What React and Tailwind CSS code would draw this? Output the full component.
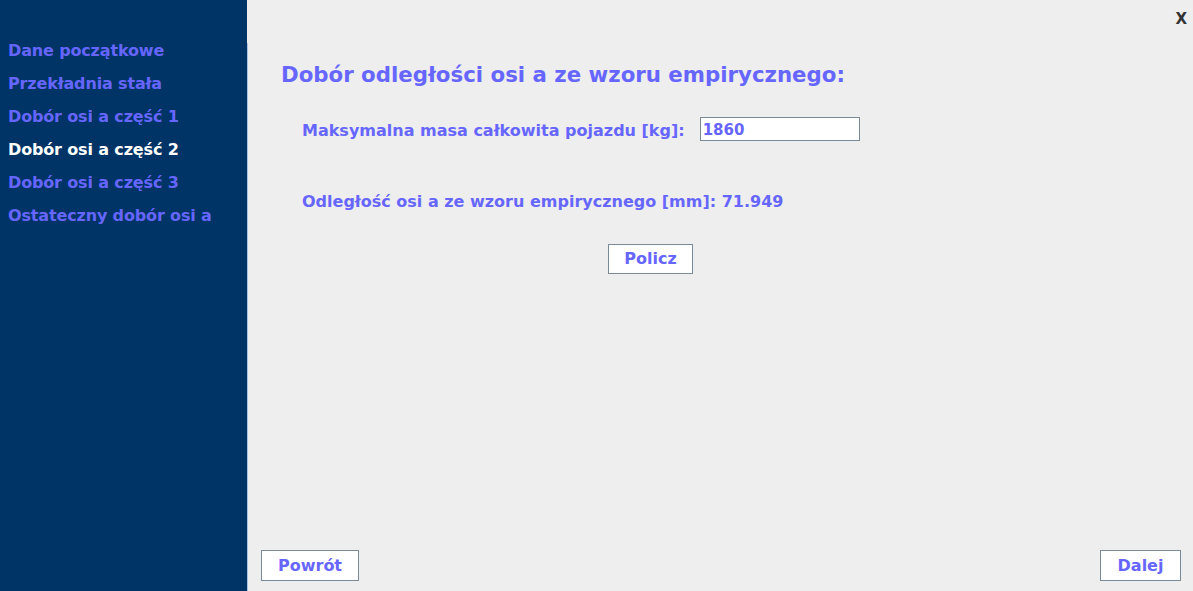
import React from "react";

const items = [
  "Dane początkowe",
  "Przekładnia stała",
  "Dobór osi a część 1",
  "Dobór osi a część 2",
  "Dobór osi a część 3",
  "Ostateczny dobór osi a",
];

export default function App() {
  return (
    <div className="flex h-[591px] w-full overflow-hidden font-['DejaVu_Sans',sans-serif] font-bold">
      <aside className="w-[247px] shrink-0 bg-[#003366] pt-[34px]">
        {items.map((t, i) => (
          <div
            key={t}
            className={`h-[33px] pl-[8px] text-[16px] leading-[33px] tracking-[-0.15px] ${
              i === 3 ? "text-white" : "text-[#6666ff]"
            }`}
          >
            {t}
          </div>
        ))}
      </aside>
      <div className="flex min-w-0 flex-1 bg-[#eeeeee]">
        <div className="mt-[43px] w-px bg-[#a9c4e4]" />
        <main className="flex min-w-0 flex-1 flex-col">
          <div className="flex h-[38px] items-center justify-end pr-[6px]">
            <span className="text-[15px] text-[#333333]">X</span>
          </div>
          <h1 className="mt-[22px] pl-[33px] text-[21.3px] leading-[30px] text-[#6666ff]">
            Dobór odległości osi a ze wzoru empirycznego:
          </h1>
          <div className="mt-[27px] flex h-[24px] items-center pl-[54px]">
            <span className="pt-[3px] text-[16px] text-[#6666ff]">
              Maksymalna masa całkowita pojazdu [kg]:
            </span>
            <input
              defaultValue="1860"
              className="ml-[15px] h-[24px] w-[160px] border border-[#7a8a99] bg-white px-[2px] pt-[2px] text-[15px] font-bold text-[#6666ff] outline-none"
            />
          </div>
          <div className="mt-[48px] h-[24px] pl-[54px] pt-[1px] text-[16px] leading-[24px] text-[#6666ff]">
            Odległość osi a ze wzoru empirycznego [mm]: 71.949
          </div>
          <div className="mt-[31px] pl-[360px]">
            <button className="h-[30px] w-[85px] border border-[#7a8a99] bg-white text-[16px] font-bold text-[#6666ff]">
              Policz
            </button>
          </div>
          <div className="mt-auto flex justify-between pb-[10px] pl-[13px] pr-[12px]">
            <button className="h-[31px] w-[98px] border border-[#7a8a99] bg-white text-[16px] font-bold text-[#6666ff]">
              Powrót
            </button>
            <button className="h-[31px] w-[81px] border border-[#7a8a99] bg-white text-[16px] font-bold text-[#6666ff]">
              Dalej
            </button>
          </div>
        </main>
      </div>
    </div>
  );
}
